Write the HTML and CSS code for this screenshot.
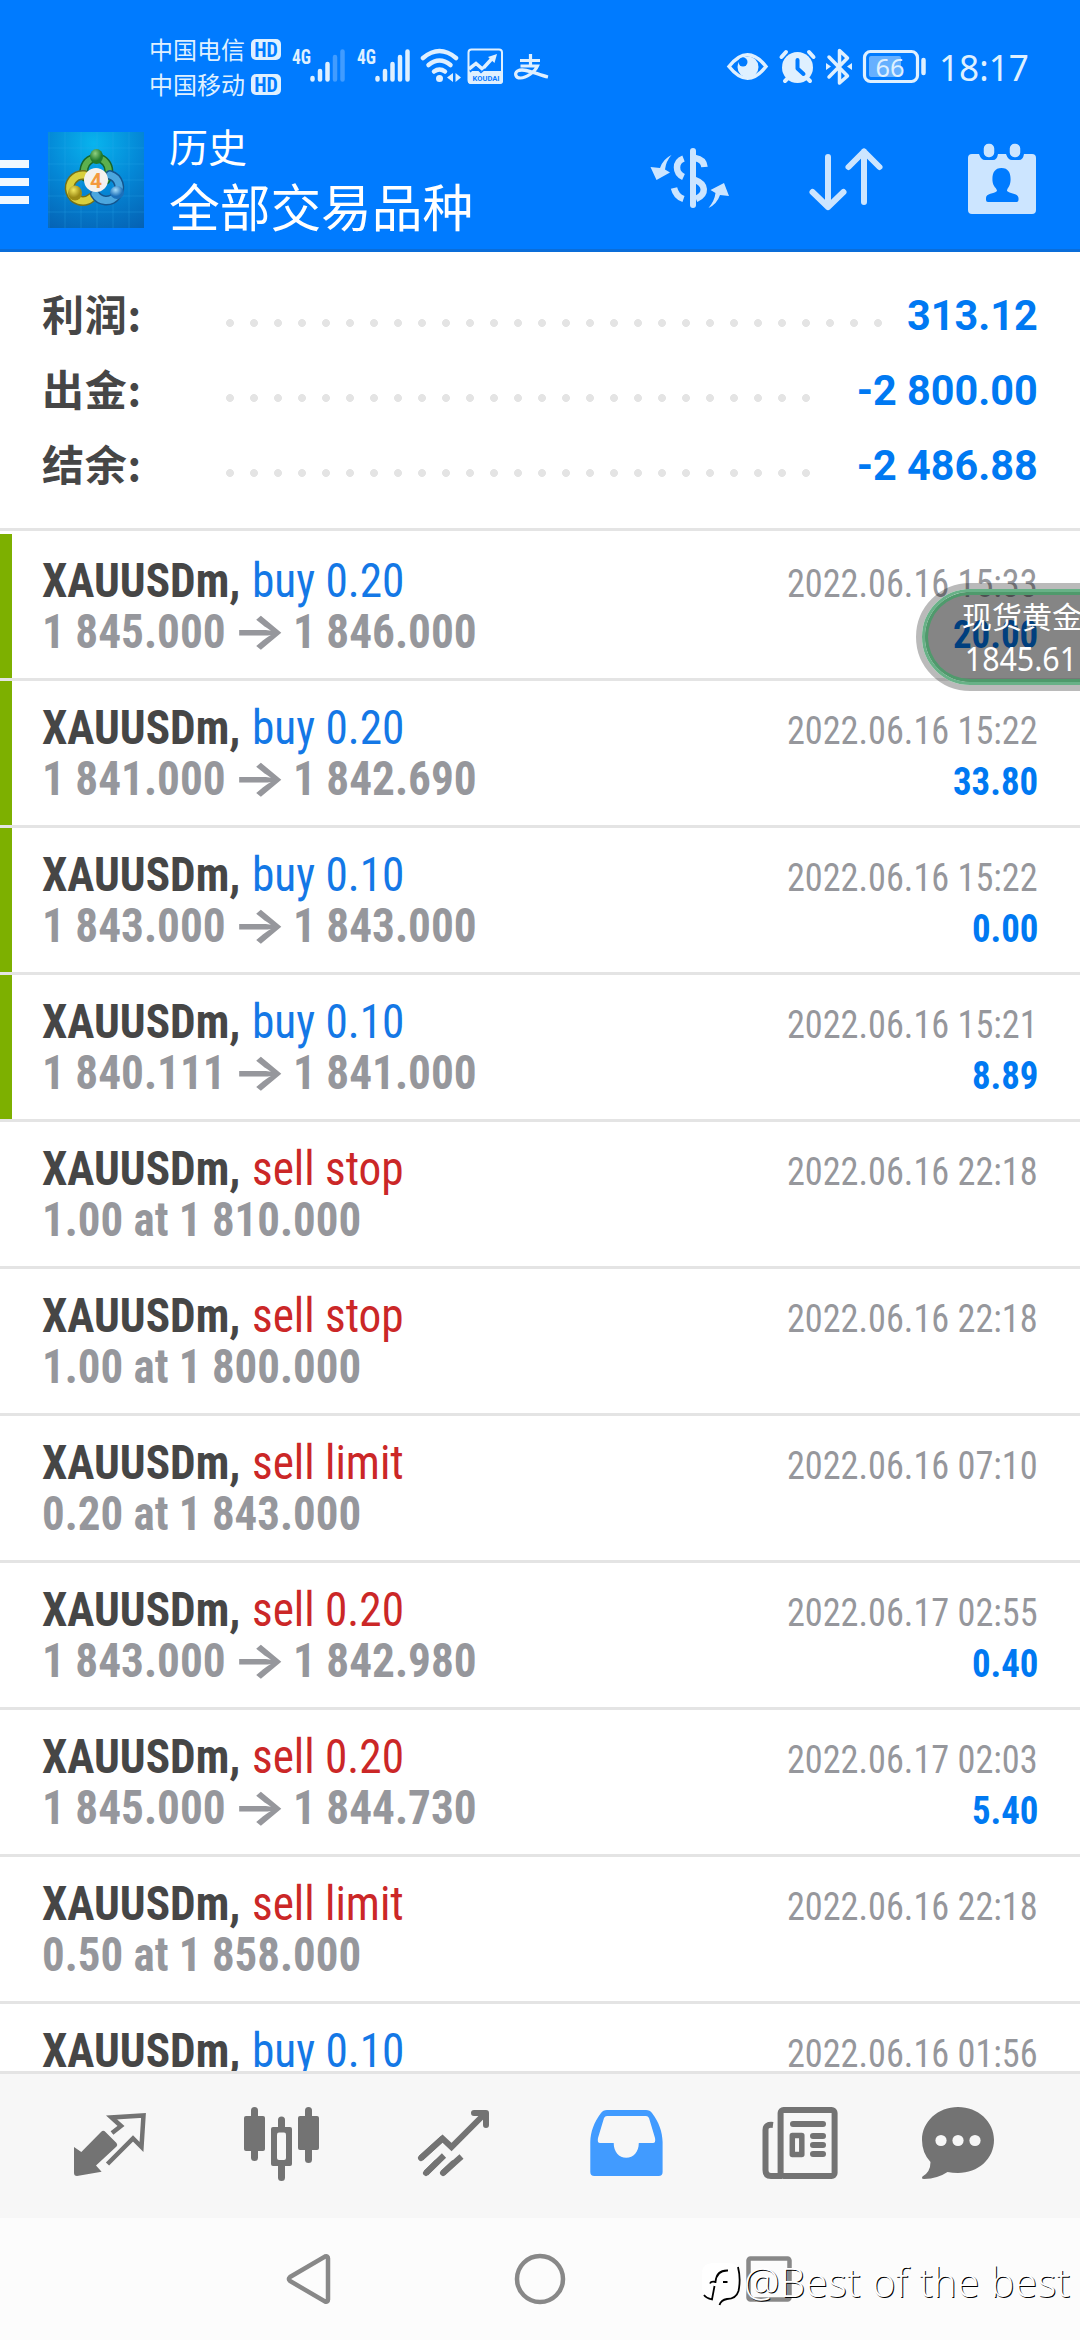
FILE: index.html
```html
<!DOCTYPE html>
<html lang="zh-CN">
<head>
<meta charset="utf-8">
<title>历史</title>
<link rel="stylesheet" href="styles.css">
</head>
<body>
<div class="screen">
  <header class="header">
    <div class="status">
      <div class="carriers">
        <div class="carrier">中国电信<b class="hd">HD</b></div>
        <div class="carrier">中国移动<b class="hd">HD</b></div>
      </div>
      <svg class="signal" viewBox="290 45 60 40">
        <text x="292" y="64" class="net" textLength="19" lengthAdjust="spacingAndGlyphs">4G</text>
        <g class="bars"><path d="M312.500 79.500V78"/><path d="M320 79.500V71"/><path d="M327.500 79.500V64"/><path class="dim" d="M335 79.500V57M342.500 79.500V51.500"/></g>
      </svg>
      <svg class="signal second" viewBox="355 45 60 40">
        <text x="357" y="64" class="net" textLength="19" lengthAdjust="spacingAndGlyphs">4G</text>
        <g class="bars"><path d="M377.500 79.500V78M385 79.500V71M392.500 79.500V64M400 79.500V57M407.500 79.500V51.500"/></g>
      </svg>
      <svg class="wifi" viewBox="418 45 46 40">
        <g fill="none" stroke="#dff0ff" stroke-width="4.500" stroke-linecap="round"><path d="M423 58Q439.500 44 456 58"/><path d="M428.500 65Q439.500 56 450.500 65"/><path d="M434 71.500Q439.500 67.500 445 71.500"/></g>
        <circle cx="439.500" cy="78.500" r="3.500" fill="#dff0ff"/><path d="M447 77.500L453 73V82ZM461 77.500L455.500 73V82Z" fill="#dff0ff"/>
      </svg>
      <svg class="koudai" viewBox="466 47 38 38">
        <rect x="468.500" y="49.500" width="33.500" height="33.500" rx="3" fill="none" stroke="#dff0ff" stroke-width="2"/>
        <path d="M468 71H503V81Q503 84 500 84H471Q468 84 468 81Z" fill="#dff0ff"/>
        <path d="M469 69L476 63.500L482.500 69L493 57.500" fill="none" stroke="#dff0ff" stroke-width="3.500"/><path d="M488 57L497 54L494.500 63Z" fill="#dff0ff"/>
        <path d="M470 72L475.500 67L481 72.500L485 69" fill="none" stroke="#0a7bff" stroke-width="1.500"/>
        <text x="472.500" y="81" class="koudai-name" textLength="27" lengthAdjust="spacingAndGlyphs">KOUDAI</text>
      </svg>
      <svg class="alipay" viewBox="513 51 36 30">
        <path d="M520 60.500H540M530.500 54V65M520.500 66H537.500C535 72 526 78 520.500 78C515 78 514.500 73 517.500 71C524 67 537 74.500 548 77" fill="none" stroke="#dff0ff" stroke-width="3.200"/>
      </svg>
      <svg class="eye" viewBox="725 48 46 38">
        <path d="M729 66.500Q747.500 43 766 66.500Q747.500 90 729 66.500Z" fill="none" stroke="#dff0ff" stroke-width="3.500"/>
        <circle cx="748" cy="67" r="10.500" fill="#dff0ff"/><circle cx="743" cy="62" r="4.500" fill="#007bff"/>
      </svg>
      <svg class="alarm" viewBox="778 47 40 40">
        <circle cx="797.500" cy="67.500" r="15.500" fill="#dff0ff"/>
        <path d="M781.500 57L786 52M813.500 57L809 52M785 81L788 78M810 81L807 78" stroke="#dff0ff" stroke-width="4" stroke-linecap="round"/>
        <path d="M797.500 60V68.500L803.500 74" fill="none" stroke="#007bff" stroke-width="4" stroke-linecap="round" stroke-linejoin="round"/>
      </svg>
      <svg class="bluetooth" viewBox="822 46 34 42">
        <path d="M829 57L847.500 76L839.500 83V50.500L847.500 58L829 77" fill="none" stroke="#dff0ff" stroke-width="3.500" stroke-linecap="round" stroke-linejoin="round"/><path d="M826 63L831 66.500L826 70ZM852 63L847 66.500L852 70Z" fill="#dff0ff"/>
      </svg>
      <svg class="battery" viewBox="860 47 70 40">
        <rect x="864.500" y="51.500" width="53" height="30" rx="6" fill="none" stroke="#dff0ff" stroke-width="3.200"/>
        <rect x="869" y="56" width="32" height="21" rx="2" fill="#66b0ff"/><path d="M923.500 60V73" stroke="#dff0ff" stroke-width="4.500" stroke-linecap="round"/>
        <text x="875.500" y="77" class="charge" textLength="29" lengthAdjust="spacingAndGlyphs">66</text>
      </svg>
      <div class="clock">18:17</div>
    </div>
    <div class="toolbar">
      <div class="menu"><i></i><i></i><i></i></div>
      <svg class="logo" viewBox="0 0 96 96">
        <defs>
          <radialGradient id="sky" cx=".48" cy=".12" r="1"><stop offset="0" stop-color="#08b4ee"/><stop offset=".5" stop-color="#0487d6"/><stop offset="1" stop-color="#0562b4"/></radialGradient>
          <radialGradient id="green" cx=".4" cy=".3"><stop offset="0" stop-color="#8fd080"/><stop offset="1" stop-color="#217a2d"/></radialGradient>
          <radialGradient id="gold" cx=".4" cy=".3"><stop offset="0" stop-color="#f3e860"/><stop offset="1" stop-color="#9c8a14"/></radialGradient>
          <radialGradient id="blue" cx=".4" cy=".3"><stop offset="0" stop-color="#a5dcfa"/><stop offset="1" stop-color="#1c70ba"/></radialGradient>
        </defs>
        <rect width="96" height="96" fill="url(#sky)"/>
        <path d="M1 0V96M17 0V96M33 0V96M49 0V96M65 0V96M81 0V96M0 16H96M0 32H96M0 48H96M0 64H96M0 80H96" stroke="#35b4ee" stroke-opacity=".25"/>
        <g fill="none" stroke-linecap="round">
          <path d="M37 45A12.500 13.500 0 1 1 58 48" stroke="#17662a" stroke-width="9"/><path d="M37 45A12.500 13.500 0 1 1 58 48" stroke="#5cb04e" stroke-width="6"/>
          <path d="M43 66A13 13 0 1 1 36 43" stroke="#72701a" stroke-width="10"/><path d="M43 66A13 13 0 1 1 36 43" stroke="#d8cf3d" stroke-width="7"/>
          <path d="M62 43A13 13 0 1 1 47 62" stroke="#14558e" stroke-width="10"/><path d="M62 43A13 13 0 1 1 47 62" stroke="#4ba6de" stroke-width="7"/>
        </g>
        <ellipse cx="48.500" cy="24.500" rx="6.500" ry="7.500" fill="url(#green)"/><ellipse cx="27" cy="61" rx="7" ry="7.500" fill="url(#gold)"/><ellipse cx="69" cy="60.500" rx="7" ry="6.500" fill="url(#blue)"/>
        <circle cx="48" cy="48" r="12" fill="#f3f1ef"/>
        <text x="42" y="56" class="logo-num">4</text>
      </svg>
      <div class="titles"><div class="title">历史</div><div class="subtitle">全部交易品种</div></div>
      <svg class="act currency" viewBox="645 140 90 76" fill="none" stroke="#cce5ff">
        <path d="M693 151V205" stroke-width="6" stroke-linecap="round"/>
        <path d="M683.500 158.500Q677 161 677 167.500Q677 174 683.500 177M674 188Q676 196.500 683.500 199" stroke-width="6.500"/><path d="M695 158C701 159 704 162 704.500 167M695 180C706 184 707 194 696 199" stroke-width="6.500"/>
        <path d="M671.500 155Q663 159 660 168L650.500 167L656.500 180L670 172.500L665 169.500Q666 161 671.500 155ZM708.500 208Q717 204 720 195L729 196L724 183L710.500 190L715.500 193Q714.500 201 708.500 208Z" fill="#cce5ff" stroke="none"/>
      </svg>
      <svg class="act sort" viewBox="805 140 82 76" fill="none" stroke="#cce5ff" stroke-width="6" stroke-linecap="round" stroke-linejoin="round"><path d="M828 157V207M812.500 192L828 207L843.500 192M864 202V151.500M848.500 167L864 151.500L879.500 167"/></svg>
      <svg class="act calendar" viewBox="964 140 76 76">
        <path d="M972 154H979Q981 160 985 160H993Q997 160 998 154H1006Q1008 160 1012 160H1019Q1023 160 1024 154H1032Q1036 154 1036 158V210Q1036 214 1032 214H972Q968 214 968 210V158Q968 154 972 154Z" fill="#cce5ff"/>
        <g fill="#cce5ff" stroke="#007bff" stroke-width="2.500"><rect x="982.500" y="142.500" width="13" height="16" rx="6"/><rect x="1008.500" y="142.500" width="13" height="16" rx="6"/></g>
        <path d="M1001.500 168C1009 168 1011 174 1010.500 181C1010 187 1007 188 1007 191C1010 194 1018 193 1018.500 198V200Q1018.500 202 1016.500 202H988Q986 202 986 200V198C986 193 994 194 997 191C997 188 993 187 992.500 181C992 174 994 168 1001.500 168Z" fill="#007bff"/>
      </svg>
    </div>
  </header>

  <section class="summary">
    <div class="sum"><span class="label">利润:</span><i class="dots long"></i><span class="value">313.12</span></div>
    <div class="sum"><span class="label">出金:</span><i class="dots"></i><span class="value">-2 800.00</span></div>
    <div class="sum"><span class="label">结余:</span><i class="dots"></i><span class="value">-2 486.88</span></div>
  </section>

  <main class="deals">
    <div class="deal closed"><div class="line"><span class="sym">XAUUSDm,</span><span class="buy">buy 0.20</span><time>2022.06.16 15:33</time></div><div class="line"><span class="price">1 845.000</span><span class="arrow">→</span><span class="price">1 846.000</span><span class="profit">20.00</span></div></div>
    <div class="deal closed"><div class="line"><span class="sym">XAUUSDm,</span><span class="buy">buy 0.20</span><time>2022.06.16 15:22</time></div><div class="line"><span class="price">1 841.000</span><span class="arrow">→</span><span class="price">1 842.690</span><span class="profit">33.80</span></div></div>
    <div class="deal closed"><div class="line"><span class="sym">XAUUSDm,</span><span class="buy">buy 0.10</span><time>2022.06.16 15:22</time></div><div class="line"><span class="price">1 843.000</span><span class="arrow">→</span><span class="price">1 843.000</span><span class="profit">0.00</span></div></div>
    <div class="deal closed"><div class="line"><span class="sym">XAUUSDm,</span><span class="buy">buy 0.10</span><time>2022.06.16 15:21</time></div><div class="line"><span class="price">1 840.111</span><span class="arrow">→</span><span class="price">1 841.000</span><span class="profit">8.89</span></div></div>
    <div class="deal"><div class="line"><span class="sym">XAUUSDm,</span><span class="sell">sell stop</span><time>2022.06.16 22:18</time></div><div class="line"><span class="price">1.00 at 1 810.000</span></div></div>
    <div class="deal"><div class="line"><span class="sym">XAUUSDm,</span><span class="sell">sell stop</span><time>2022.06.16 22:18</time></div><div class="line"><span class="price">1.00 at 1 800.000</span></div></div>
    <div class="deal"><div class="line"><span class="sym">XAUUSDm,</span><span class="sell">sell limit</span><time>2022.06.16 07:10</time></div><div class="line"><span class="price">0.20 at 1 843.000</span></div></div>
    <div class="deal"><div class="line"><span class="sym">XAUUSDm,</span><span class="sell">sell 0.20</span><time>2022.06.17 02:55</time></div><div class="line"><span class="price">1 843.000</span><span class="arrow">→</span><span class="price">1 842.980</span><span class="profit">0.40</span></div></div>
    <div class="deal"><div class="line"><span class="sym">XAUUSDm,</span><span class="sell">sell 0.20</span><time>2022.06.17 02:03</time></div><div class="line"><span class="price">1 845.000</span><span class="arrow">→</span><span class="price">1 844.730</span><span class="profit">5.40</span></div></div>
    <div class="deal"><div class="line"><span class="sym">XAUUSDm,</span><span class="sell">sell limit</span><time>2022.06.16 22:18</time></div><div class="line"><span class="price">0.50 at 1 858.000</span></div></div>
    <div class="deal"><div class="line"><span class="sym">XAUUSDm,</span><span class="buy">buy 0.10</span><time>2022.06.16 01:56</time></div></div>
  </main>

  <nav class="tabs">
    <svg viewBox="62 2098 96 96"><path d="M74 2147L81.300 2152L101 2132Q103.300 2129.700 105.500 2132L116.500 2143Q118 2145 116.500 2146.500L96 2165.500L101.600 2171.700L77 2176Q74 2176 74 2173Z" fill="#737373"/><path d="M112 2133L121 2126L111.500 2117.500L143.500 2115.500L141.500 2147L133 2138.500L107.500 2164" fill="none" stroke="#737373" stroke-width="4.500"/></svg>
    <svg viewBox="234 2098 96 96" fill="#737373"><rect x="244" y="2116" width="21" height="35" rx="2"/><rect x="251" y="2107" width="7" height="54" rx="3.500"/><rect x="298" y="2116" width="21" height="34" rx="2"/><rect x="305" y="2107" width="7" height="56" rx="3.500"/><rect x="278" y="2116.500" width="7" height="64.500" rx="3.500"/><rect x="271" y="2127" width="21" height="39" rx="2"/><rect x="277" y="2132.500" width="9" height="27.500" rx="2" fill="#f7f7f7"/></svg>
    <svg viewBox="406 2098 96 96" fill="none" stroke="#737373" stroke-width="6"><path d="M421 2158L442.500 2138.500L451.500 2147L484 2114.500M426 2173L444 2155.500M443 2173L461.500 2156.500"/><path d="M421 2158L442 2139M426 2173L436 2163M443 2173L453 2163.500M474 2113H486V2125" stroke-linecap="round" stroke-linejoin="round"/></svg>
    <svg viewBox="578 2098 96 96"><path fill="#419bff" fill-rule="evenodd" d="M590.300 2142C590.500 2132 594 2122 601 2113Q603 2110 607 2110H646Q650 2110 652 2113C659 2122 662.400 2132 662.600 2142V2172Q662.600 2176 658.600 2176H594.300Q590.300 2176 590.300 2172ZM607 2116Q605 2116 604 2118L598 2138Q597 2143 600 2143H613.700C613.700 2152 619 2157.700 626.200 2157.700C633.500 2157.700 638.800 2152 638.800 2143H653Q656 2143 655 2138L649 2118Q648 2116 646 2116Z"/></svg>
    <svg viewBox="750 2098 96 96" fill="none" stroke="#737373" stroke-width="6"><rect x="780.600" y="2110" width="54" height="66" rx="3"/><path d="M773 2125Q765.500 2124 765.500 2130V2170Q765.500 2176 771 2176H782"/><path d="M793 2124H823M813 2136H823M813 2145H823M813 2154H823" stroke-linecap="round"/><rect x="792.300" y="2135.500" width="9.500" height="19" stroke-width="5.500" stroke-linejoin="round"/></svg>
    <svg class="chat" viewBox="910 2098 96 96"><path d="M958 2107C978 2107 994 2121.500 994 2140C994 2159 978 2173 958 2173Q952.500 2173 947.500 2172Q938 2178.500 924 2179Q921 2179 922.500 2176.500Q930.500 2172 930.500 2162Q922 2153 922 2140C922 2121.500 938 2107 958 2107Z" fill="#737373"/><g fill="#f7f7f7"><circle cx="941" cy="2140.500" r="5.600"/><circle cx="958" cy="2140.500" r="5.600"/><circle cx="975" cy="2140.500" r="5.600"/></g></svg>
  </nav>

  <footer class="sysnav">
    <svg viewBox="280 2250 56 58" class="back"><path d="M290 2277L325 2256.500Q328 2255.500 328 2258.500V2299.500Q328 2302.500 325 2301.500L290 2281Q288 2279 290 2277Z"/></svg>
    <svg viewBox="512 2250 56 58" class="home"><circle cx="540" cy="2279" r="23"/></svg>
    <svg viewBox="741 2250 56 58" class="recent"><rect x="748.500" y="2258.500" width="41" height="41" rx="2"/></svg>
  </footer>

  <div class="quote"><div class="quote-in"><div class="q-name">现货黄金</div><div class="q-price">1845.61</div></div></div>
  <div class="watermark">
    <svg viewBox="698 2258 46 50"><path d="M714 2262H729Q739 2262 739 2272V2286Q739 2298 727 2298L720 2304L717 2299Q702 2298 702 2286V2272Q702 2262 714 2262Z" fill="#fff"/><path d="M704 2294Q706 2297 712 2298.500L714.500 2285M710 2282.500Q711 2280 715.500 2281Q716.500 2269 728 2269.500M723 2281H727.500M738 2266Q741 2278 738.500 2290Q736 2298 727 2298Q721 2299 719.500 2304" fill="none" stroke="#000" stroke-width="1.800"/></svg>
    <span>@Best of the best</span>
  </div>
</div>
</body>
</html>
```
FILE: styles.css
```css
* { box-sizing: border-box; }
body { margin: 0; background: #fff; font-family: Roboto, "Noto Sans CJK SC", sans-serif; }
svg { display: block; flex: none; }
.screen { position: relative; display: flex; flex-direction: column; width: 1080px; height: 2340px; overflow: hidden; }

.header { height: 252px; flex: none; background: #007bff; border-bottom: 3px solid #0a6dd9; color: #fff; }
.status { display: flex; height: 120px; padding-left: 149px; align-items: flex-start; }
.carriers { flex: none; padding-top: 32px; width: 141px; }
.carrier { display: flex; align-items: center; gap: 6px; height: 35px; font: 24px/30px "Noto Sans CJK SC", sans-serif; color: #dff0ff; padding-bottom: 2px; }
.hd { width: 30px; height: 21px; margin-top: 2px; border-radius: 5px; background: #dff0ff; color: #007bff; font: 700 20px/22px "Roboto Condensed", sans-serif; text-align: center; }
.signal { width: 60px; height: 40px; margin-top: 45px; }
.second { margin-left: 5px; }
.net { font: 700 20px "Roboto Condensed", sans-serif; fill: #dff0ff; }
.bars { fill: none; stroke: #dff0ff; stroke-width: 4.5px; stroke-linecap: round; }
.bars .dim { stroke: #419cff; }
.wifi { width: 46px; height: 40px; margin: 45px 0 0 3px; }
.koudai { width: 38px; height: 38px; margin: 47px 0 0 2px; }
.koudai-name { font: 700 8px Roboto, sans-serif; fill: #0a7bff; }
.alipay { width: 36px; height: 30px; margin: 51px 0 0 9px; }
.eye { width: 46px; height: 38px; margin: 48px 0 0 176px; }
.alarm { width: 40px; height: 40px; margin: 47px 0 0 7px; }
.bluetooth { width: 34px; height: 42px; margin: 46px 0 0 4px; }
.battery { width: 70px; height: 40px; margin: 47px 0 0 4px; }
.charge { font: 26px "Noto Sans", sans-serif; fill: #dff0ff; }
.clock { flex: none; margin: 42px 0 0 9px; font: 37px/50px "Noto Sans", sans-serif; color: #dff0ff; white-space: nowrap; transform: scaleX(.95); transform-origin: left; }

.toolbar { display: flex; align-items: flex-start; height: 129px; }
.menu { display: flex; flex-direction: column; gap: 10px; width: 29px; margin-top: 40px; }
.menu i { height: 8px; background: #f0f8ff; }
.logo { width: 96px; height: 96px; margin: 12px 0 0 19px; }
.logo-num { font: 700 21px Roboto, sans-serif; fill: #f39a3e; }
.titles { margin-left: 25px; width: 476px; margin-top: -3px; font-family: "Noto Sans CJK SC", sans-serif; }
.title { font-size: 39px; line-height: 56px; }
.subtitle { font-size: 50.7px; line-height: 65px; }
.act { height: 76px; margin-top: 20px; }
.currency { width: 90px; }
.sort { width: 82px; margin-left: 70px; }
.calendar { width: 76px; margin-left: 77px; }

.summary { height: 279px; flex: none; padding: 26px 42px 0; border-bottom: 3px solid #e4e4e4; }
.sum { display: flex; align-items: center; height: 75px; }
.label { width: 176px; padding-bottom: 5px; font: 700 42px/60px "Noto Sans CJK SC", sans-serif; letter-spacing: .8px; color: #464646; }
.dots { width: 600px; height: 8px; margin-top: 14px; background: radial-gradient(circle at 12px 4px, #e4e4e4 3.6px, transparent 4.3px) 0 0 / 24px 8px repeat-x; }
.dots.long { width: 672px; }
.value { margin-left: auto; font-size: 42px; font-weight: 700; color: #0079f2; white-space: pre; transform: scaleX(.985); transform-origin: right; }

.deals { flex: none; height: 1540px; padding-top: 3px; overflow: hidden; font-family: "Roboto Condensed", Roboto, sans-serif; }
.deal { height: 147px; padding: 17px 42px 0; border-bottom: 3px solid #e4e4e4; }
.closed { padding-left: 30px; background: linear-gradient(#7db000, #7db000) no-repeat; background-size: 12px 100%; }
.closed .line { padding-left: 12px; }
.line { display: flex; align-items: baseline; height: 51px; line-height: 60px; font-size: 48px; white-space: pre; }
.sym, .buy, .sell, .price { flex: none; transform: scaleX(.943); transform-origin: left; }
.sym { font-weight: 700; color: #464646; width: 210px; }
.buy { color: #1478e6; }
.sell { color: #cb2727; }
.price { font-weight: 700; color: #96979c; width: 184px; }
.price:only-child { width: auto; transform: scaleX(.936); }
.arrow { flex: none; font-family: Inter, sans-serif; font-weight: 700; line-height: 40px; color: #96979c; width: 67px; text-align: center; transform: scaleX(1.2); }
time { margin-left: auto; font-size: 39px; color: #96979c; transform: scaleX(.93); transform-origin: right; }
.profit { margin-left: auto; font-size: 39px; font-weight: 700; color: #0079f2; transform: scaleX(.945); transform-origin: right; }

.tabs { display: flex; gap: 76px; flex: none; height: 147px; padding: 24px 0 0 62px; background: #f7f7f7; border-top: 3px solid #e4e4e4; }
.tabs svg { width: 96px; height: 96px; }
.tabs .chat { margin-left: -12px; }
.sysnav { display: flex; flex: 1; padding: 32px 0 0 280px; background: #fcfcfc; }
.sysnav svg { width: 56px; height: 58px; fill: none; stroke: #888; stroke-width: 4.5px; }
.sysnav .home { margin-left: 176px; }
.sysnav .recent { margin-left: 173px; }

.quote { position: absolute; left: 916px; top: 583px; width: 300px; height: 108px; border: 6px solid rgba(0, 0, 0, .27); border-radius: 54px; }
.quote-in { height: 96px; border-radius: 48px; border: 3px solid #68b187; background: rgba(0, 0, 0, .48); background-clip: padding-box; box-shadow: inset 0 0 0 3px #4f9a6c; padding: 4px 0 0 37px; color: #fff; white-space: nowrap; }
.q-name { font: 30px/38px "Noto Sans CJK SC", sans-serif; }
.q-price { font: 33px/49px "Noto Sans", sans-serif; padding-left: 3px; transform: scaleX(.92); transform-origin: left; }
.watermark { position: absolute; left: 698px; top: 2255px; display: flex; align-items: center; }
.watermark svg { width: 46px; height: 50px; margin-top: 4px; }
.watermark span { font: 300 40px/50px "Open Sans", sans-serif; letter-spacing: .5px; color: #fff; text-shadow: 1px 1px 0 #000; white-space: nowrap; }
```
